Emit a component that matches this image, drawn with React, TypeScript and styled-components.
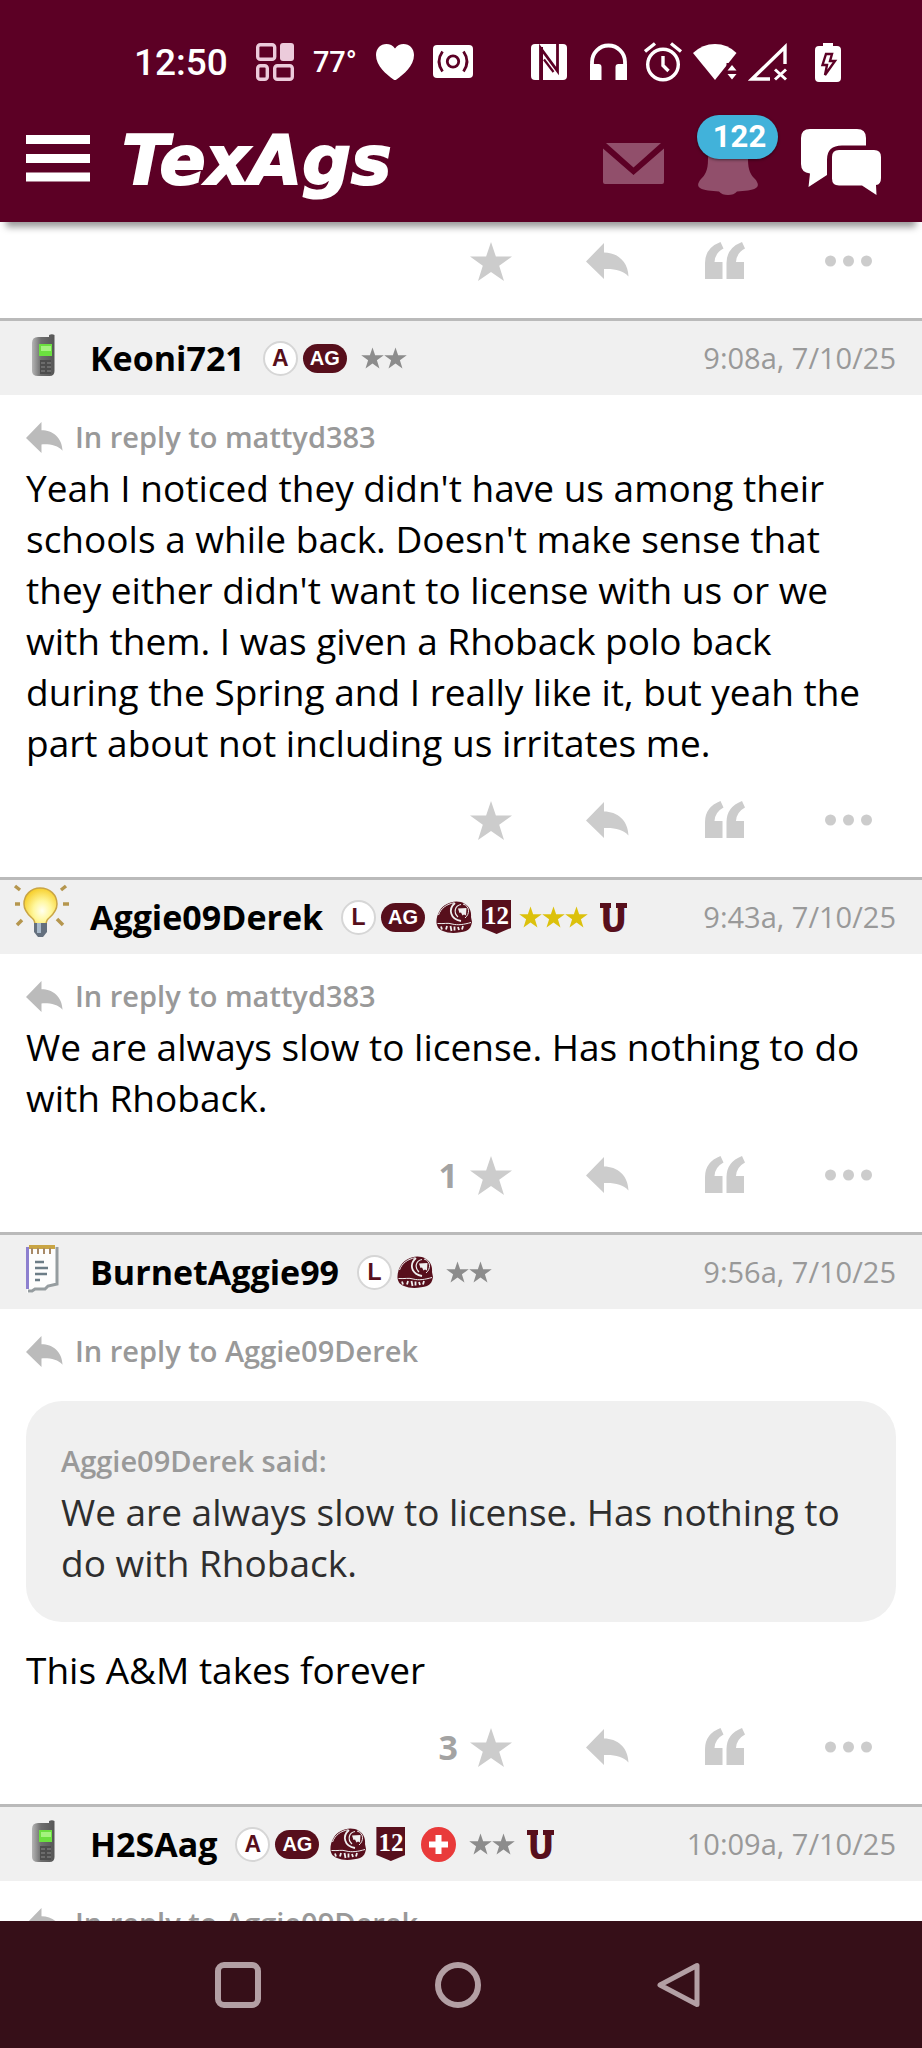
import React from "react";
import styled, { createGlobalStyle } from "styled-components";

const MAROON = "#5c0025";
const BADGE = "#570f1c";
const SANS = '"Open Sans", "Noto Sans", sans-serif';
const STAR = "M21 0 L25.9 14.6 H42 L29.2 23.7 L34 39 L21 29.9 L8 39 L12.8 23.7 L0 14.6 H16.1 Z";

const GlobalStyle = createGlobalStyle`
  * { box-sizing: border-box; }
  body { margin: 0; background: #fff; }
  button { padding: 0; border: 0; background: none; color: inherit; font: inherit; cursor: pointer; }
  a { color: inherit; text-decoration: none; }
  svg { display: block; flex: none; }
`;

const Screen = styled.div`
  display: flex;
  flex-direction: column;
  height: 100vh;
  font-family: ${SANS};
  color: #000;
`;

const Header = styled.header`
  position: relative;
  z-index: 1;
  flex: none;
  background: ${MAROON};
  color: #fff;
  box-shadow: 0 11px 7px -6px rgba(0, 0, 0, 0.4);
`;

const StatusBar = styled.div`
  display: flex;
  align-items: center;
  justify-content: space-between;
  height: 96px;
  padding: 28px 81px 0 134px;
  font-family: Roboto, sans-serif;
  font-weight: 500;
`;

const StatusGroup = styled.div<{ $gap: number }>`
  display: flex;
  align-items: center;
  gap: ${(p) => p.$gap}px;
`;

const Clock = styled.time`
  font-size: 37px;
  margin-right: 9px;
`;

const Temperature = styled.span`
  font-size: 29px;
`;

const TopBar = styled.div`
  display: flex;
  align-items: center;
  height: 126px;
  padding: 6px 41px 0 26px;
`;

const Logo = styled.a`
  flex: 1;
  margin-left: 32px;
  padding-bottom: 2px;
  font: italic 700 68px/72px "DejaVu Sans", sans-serif;
  -webkit-text-stroke: 2px #fff;
`;

const BarButton = styled.button<{ $left?: number }>`
  position: relative;
  margin-left: ${(p) => p.$left ?? 0}px;
`;

const Count = styled.span`
  position: absolute;
  left: 0;
  top: -14px;
  width: 81px;
  height: 44px;
  border-radius: 22px;
  background: #41b2da;
  box-shadow: 0 1px 3px rgba(0, 0, 0, 0.5);
  color: #fff;
  font: 700 31px/43px Roboto, sans-serif;
  text-align: center;
  padding-left: 4px;
`;

const Feed = styled.main`
  flex: 1;
  min-height: 0;
  overflow: hidden;
`;

const Post = styled.article``;

const PostHeader = styled.header`
  display: flex;
  align-items: center;
  height: 77px;
  padding-right: 26px;
  border-top: 3px solid #bababa;
  background: #f0f0f0;
`;

const UserName = styled.a`
  margin-right: 18px;
  font-size: 34px;
  line-height: 48px;
  font-weight: 700;
`;

const Badges = styled.div`
  display: flex;
  align-items: center;
`;

const Circle = styled.span`
  width: 35px;
  height: 35px;
  border: 2px solid #d6d6d6;
  border-radius: 50%;
  background: #fff;
  color: ${BADGE};
  font: 700 23px/31px "Liberation Sans", sans-serif;
  text-align: center;
`;

const Pill = styled.span`
  width: 44px;
  height: 29px;
  margin: 0 6px 0 5px;
  border-radius: 15px;
  background: ${BADGE};
  color: #fff;
  font: 700 20px/29px "Liberation Sans", sans-serif;
  text-align: center;
`;

const HelmetBox = styled.span`
  margin: 0 5px;
`;

const Shield = styled.span`
  width: 29px;
  height: 34px;
  margin-left: 5px;
  background: ${BADGE};
  clip-path: polygon(0 0, 100% 0, 100% 82%, 50% 100%, 0 82%);
  color: #fff;
  font: 700 25px/31px "Liberation Serif", serif;
  text-align: center;
`;

const Plus = styled.span`
  margin: 0 5px 0 16px;
`;

const StarRow = styled.span`
  display: flex;
  margin-left: 8px;
`;

const BlockU = styled.span`
  width: 27px;
  height: 29px;
  margin-left: 12px;
  background:
    linear-gradient(${BADGE}, ${BADGE}) 0 0 / 11px 5px no-repeat,
    linear-gradient(${BADGE}, ${BADGE}) 100% 0 / 11px 5px no-repeat;
  color: ${BADGE};
  font: 700 44px/35px "Liberation Mono", monospace;
  text-align: center;
`;

const Posted = styled.time`
  margin-left: auto;
  color: #999;
  font-size: 29px;
  line-height: 42px;
`;

const PostBody = styled.div`
  padding: 21px 26px 0;
`;

const InReply = styled.a`
  display: flex;
  align-items: center;
  gap: 12px;
  margin-bottom: 4px;
  color: #999;
  font-size: 29px;
  line-height: 42px;
  font-weight: 600;
`;

const Message = styled.p`
  margin: 0;
  padding-right: 8px;
  font-size: 37px;
  line-height: 51px;
`;

const Quote = styled.blockquote`
  margin: 29px 0 22px;
  padding: 39px 35px 34px;
  border-radius: 36px;
  background: #f0f0f0;
  color: #2e2e2e;
`;

const Said = styled.cite`
  display: block;
  margin-bottom: 4px;
  color: #999;
  font-size: 29px;
  line-height: 42px;
  font-style: normal;
  font-weight: 600;
`;

const Actions = styled.footer<{ $spaced?: boolean }>`
  display: flex;
  align-items: center;
  justify-content: flex-end;
  height: 96px;
  margin-top: ${(p) => (p.$spaced ? 13 : 0)}px;
  padding: 0 50px 18px 0;
  color: #ccc;
`;

const ActionButton = styled.button<{ $right: number }>`
  display: flex;
  align-items: center;
  gap: 12px;
  margin-right: ${(p) => p.$right}px;
`;

const Likes = styled.span`
  color: #a3a3a3;
  font-size: 34px;
  line-height: 40px;
  font-weight: 700;
`;

const NavBar = styled.nav`
  flex: none;
  display: flex;
  align-items: center;
  justify-content: center;
  gap: 174px;
  height: 127px;
  padding-right: 6px;
  background: #360f18;
  color: #b39fa4;
`;

/* ---------- status bar icons ---------- */

const WidgetsIcon = () => (
  <svg width="38" height="38" viewBox="0 0 38 38" fill="none" stroke="#eccbdb" strokeWidth="3.4">
    <rect x="1.7" y="1.7" width="17" height="14.6" rx="2.6" />
    <rect x="24" y="0" width="14" height="18" rx="3" fill="#eccbdb" stroke="none" />
    <rect x="1.7" y="22.7" width="9.6" height="13.6" rx="2.6" />
    <rect x="18.7" y="22.7" width="17.6" height="13.6" rx="2.6" />
  </svg>
);

const HeartIcon = () => (
  <svg width="38" height="36" viewBox="0 0 38 36" fill="#fff">
    <path d="M19 4.6C21 1.4 24.400 0 27.500 0 33.500 0 38 4.600 38 11c0 11-10.500 19.500-17.500 24.500q-1.500 1-3 0C10.500 30.500 0 22 0 11 0 4.600 4.500 0 10.500 0 13.600 0 17 1.400 19 4.600z" />
  </svg>
);

const CastIcon = () => (
  <svg width="40" height="34" viewBox="0 0 40 34" fill="none" stroke={MAROON} strokeWidth="2.8">
    <rect width="40" height="33" rx="4" fill="#fff" stroke="none" />
    <circle cx="20" cy="16.500" r="5.700" />
    <path d="M9.500 6.500Q2.500 16.500 9.500 26.500M30.500 6.500q7 10 0 20" />
  </svg>
);

const NfcIcon = () => (
  <svg width="49" height="38" viewBox="0 0 49 38">
    <rect y="1" width="36" height="36" rx="4" fill="#fff" />
    <path d="M9.500 38V5L26.500 28V0" fill="none" stroke={MAROON} strokeWidth="2.800" />
    <path d="M9 38V4h3v34z" fill={MAROON} />
    <path d="M13 16.500L22.500 29" fill="none" stroke={MAROON} strokeWidth="2.200" />
  </svg>
);

const HeadphonesIcon = () => (
  <svg width="44" height="38" viewBox="0 0 44 38">
    <path d="M2 26V19a16.500 16.500 0 0 1 33 0v7" fill="none" stroke="#fff" strokeWidth="3.800" />
    <path d="M0 21h8.500q3 0 3 3v13H0zM37 21h-8.500q-3 0-3 3v13H37z" fill="#fff" />
  </svg>
);

const AlarmIcon = () => (
  <svg width="39" height="40" viewBox="0 0 39 40" fill="none" stroke="#fff" strokeWidth="3.400">
    <circle cx="19" cy="22.500" r="15.300" />
    <path d="M19 14v9.500l5.500 5.500M1 9.500L11 1.500M27 1.500L37 9.500" />
  </svg>
);

const WifiIcon = () => (
  <svg width="45" height="38" viewBox="0 0 45 38" fill="#fff">
    <path d="M0 10Q9.500 1 22 1t21.500 9L22 37z" />
    <path d="M33.500 37V20h12v17z" fill={MAROON} />
    <path d="M34.500 27.500L39 22l4.500 5.500zM34.500 31h9L39 36.500z" />
  </svg>
);

const SignalIcon = () => (
  <svg width="57" height="38" viewBox="0 0 57 38" fill="none" stroke="#fff" strokeWidth="3.400">
    <path d="M22 36H4L37 4v17" />
    <path d="M27 26.500l11 10M38 26.500l-11 10" strokeWidth="3" />
  </svg>
);

const BatteryIcon = () => (
  <svg width="26" height="39" viewBox="0 0 26 39">
    <path d="M8 0h10v3h4q4 0 4 4v28q0 4-4 4H4q-4 0-4-4V7q0-4 4-4h4z" fill="#fff" />
    <path d="M11 11h6l-2 7h5L10 32l2-10H7.500z" fill="#fff" stroke={MAROON} strokeWidth="2.400" />
  </svg>
);

/* ---------- top bar icons ---------- */

const MenuIcon = () => (
  <svg width="64" height="66" viewBox="0 0 64 66" fill="#fff">
    <path d="M0 6h64v9H0zM0 25h64v9H0zM0 43.500h64v9H0z" />
  </svg>
);

const MailIcon = () => (
  <svg width="61" height="66" viewBox="0 0 61 66" fill="#914f6b">
    <path d="M3 14h55L30.500 38.500z" />
    <path d="M0 19.500L30.500 46 61 19.500V53q0 2-2 2H2q-2 0-2-2z" />
  </svg>
);

const BellIcon = () => (
  <svg width="81" height="66" viewBox="0 0 81 66" fill="#914f6b">
    <path d="M31 6c-14 2-20 11-20 24 0 12-3 16-7 20-5 6-4 10 7 11.500l11 1q3 3.500 9 3.500t9-3.500l11-1c11-1.500 12-5.500 7-11.500-4-4-7-8-7-20C51 17 45 8 31 6z" />
  </svg>
);

const ChatIcon = () => (
  <svg width="80" height="66" viewBox="0 0 80 66" fill="#fff">
    <path d="M9 0h47q9 0 9 9v7.500H41q-15 0-15 14V46L7.500 58 9 44.500Q0 43.500 0 35V9q0-9 9-9z" />
    <path d="M38 21h35q7 0 7 7v21q0 6.500-5 7l.500 10L61 56.500H38q-7 0-7-7V28q0-7 7-7z" />
  </svg>
);

/* ---------- action icons ---------- */

const ReplyArrow = ({ width, color }: { width: number; color: string }) => (
  <svg width={width} height={Math.round((width * 36) / 43)} viewBox="0 0 43 36" fill={color}>
    <path d="M18 0v9.500C31 9.500 42 18 42.500 33.500 37 27 28 25.500 18 26v10L0 18.500z" />
  </svg>
);

const StarIcon = () => (
  <svg width="42" height="39" viewBox="0 0 42 39" fill="currentColor"><path d={STAR} /></svg>
);

const QuoteIcon = () => (
  <svg width="40" height="38" viewBox="0 0 40 38" fill="currentColor">
    <path d="M15.500 0l3 6.500Q10 11 9.500 20h8v17H0V21Q0 6 15.500 0z" />
    <path d="M37 0l3 6.500Q31.500 11 31 20h8v17H21.500V21Q21.500 6 37 0z" />
  </svg>
);

const DotsIcon = () => (
  <svg width="47" height="12" viewBox="0 0 47 12" fill="currentColor">
    <circle cx="5.500" cy="6" r="5.500" />
    <circle cx="23.500" cy="6" r="5.500" />
    <circle cx="41.500" cy="6" r="5.500" />
  </svg>
);

/* ---------- avatars ---------- */

const PhoneAvatar = () => (
  <svg width="90" height="74" viewBox="0 0 90 74">
    <defs>
      <linearGradient id="shell" x1="0" x2="1">
        <stop offset="0" stopColor="#b5b5b5" />
        <stop offset=".4" stopColor="#6e6e6e" />
        <stop offset="1" stopColor="#565656" />
      </linearGradient>
    </defs>
    <path d="M49 14q3-1.500 5.500 0v36q0 5-5 5H38q-6 0-6-5V22q0-6 6-6h11z" fill="url(#shell)" />
    <rect x="39" y="23" width="13" height="12" fill="#6be03f" />
    <rect x="41" y="25" width="10" height="5" fill="#a4f37f" />
    <path d="M40 39h11v14H40z" fill="#4d4d4d" />
    <path d="M41 42h4m2 0h4M41 46h4m2 0h4M41 50h4m2 0h4" stroke="#777" strokeWidth="1.500" />
  </svg>
);

const BulbAvatar = () => (
  <svg width="90" height="74" viewBox="0 0 90 74">
    <defs>
      <radialGradient id="glow" cx=".55" cy=".6" r=".6">
        <stop offset="0" stopColor="#fffff0" />
        <stop offset=".45" stopColor="#fff79c" />
        <stop offset="1" stopColor="#f7cf2c" />
      </radialGradient>
    </defs>
    <path d="M15 6l5 4M66 6l-5 4M15 24h5M63 24h6M17 45l5-5M63 45l-6-6" stroke="#b5964e" strokeWidth="3.500" />
    <path d="M40 8c10 0 17 7 17 16 0 8-6 12-9 15-2 2-2 5-2 7H35c0-2 0-5-2-7-3-3-9-7-9-15C24 15 31 8 40 8z" fill="url(#glow)" stroke="#c9a545" strokeWidth="1.500" />
    <path d="M34 43h13v9l-4 5h-5l-4-5z" fill="#64707e" />
    <path d="M37 43h4v10h-4z" fill="#a9bacb" />
  </svg>
);

const NoteAvatar = () => (
  <svg width="90" height="74" viewBox="0 0 90 74">
    <path d="M27 12h30v38l-9 2-3 3H34l-3 3h-4z" fill="#fdfdfd" />
    <path d="M27.500 12v42" stroke="#8d80cf" strokeWidth="3" />
    <path d="M57 12v37l-9 2-3 3H35l-3 2h-4" fill="none" stroke="#969da0" strokeWidth="3" />
    <path d="M29 12h26" stroke="#c9a544" strokeWidth="4" />
    <path d="M32 13v6M38 13v6M44 13v6M50 13v6" stroke="#a88a68" strokeWidth="2" />
    <path d="M35 27h9M35 33h13M35 39h12M35 45h5" stroke="#6c7d87" strokeWidth="2.500" />
  </svg>
);

const avatars = { phone: PhoneAvatar, bulb: BulbAvatar, note: NoteAvatar };

/* ---------- badges ---------- */

const RingBadge = () => (
  <HelmetBox>
    <svg width="36" height="32" viewBox="0 0 36 32" fill="none">
      <path d="M.500 22C0 15 4 6 11 3 16 0 24-.500 29 3c5 3 6.500 8 6 13l1 5c-1 5-2 7-6 9-6 2-17 3-23 0C2 28 1 25 .500 22z" fill={BADGE} />
      <path d="M2.500 14C5 7 11 3 18 1.800" stroke="#f0f0f0" strokeWidth="1" />
      <path d="M19 2C12 8 14 18 25 20" stroke="#f0f0f0" strokeWidth="1.800" />
      <path d="M25 3.500c-6 1-8 8-3 12.500" stroke="#f0f0f0" strokeWidth="1.200" />
      <path d="M27 3c7 2 7 10 2 14" stroke="#f0f0f0" strokeWidth="1" />
      <path d="M22 7.500L30.500 7l-.500 7.500-2-1-1.500 1-1.500-3-1.500.500z" fill="#f0f0f0" />
      <path d="M1.500 22.500C8 23 12 21.500 16 23c6 1.500 12 .500 19-1.500" stroke="#f0f0f0" strokeWidth="1" />
      <path d="M5 25.500l1 3M11 25l-1 3.500M14.500 25l1 5M18.500 25.500v4M22 26l1 3M27 25l-1 3.500" stroke="#f0f0f0" strokeWidth="1.800" />
    </svg>
  </HelmetBox>
);

const PlusBadge = () => (
  <Plus>
    <svg width="35" height="35" viewBox="0 0 35 35">
      <circle cx="17.500" cy="17.500" r="17.500" fill="#e93a3a" />
      <path d="M17.500 8v19M8 17.500h19" stroke="#fff" strokeWidth="6" />
    </svg>
  </Plus>
);

const Stars = ({ count, color }: { count: number; color: string }) => (
  <StarRow role="img" aria-label={`${count} stars`}>
    {Array.from({ length: count }, (_, i) => (
      <svg key={i} width="23" height="22" viewBox="0 -1 42 41" fill={color}><path d={STAR} /></svg>
    ))}
  </StarRow>
);

const ActionRow = ({ likes, spaced }: { likes?: number; spaced?: boolean }) => (
  <Actions $spaced={spaced}>
    <ActionButton $right={74} aria-label="Star">
      {likes ? <Likes>{likes}</Likes> : null}
      <StarIcon />
    </ActionButton>
    <ActionButton $right={76} aria-label="Reply"><ReplyArrow width={43} color="#ccc" /></ActionButton>
    <ActionButton $right={80} aria-label="Quote"><QuoteIcon /></ActionButton>
    <ActionButton $right={0} aria-label="More"><DotsIcon /></ActionButton>
  </Actions>
);

interface PostProps {
  avatar: keyof typeof avatars;
  name: string;
  time: string;
  replyTo: string;
  badges: React.ReactNode;
  likes?: number;
  children?: React.ReactNode;
}

const ForumPost = ({ avatar, name, time, replyTo, badges, likes, children }: PostProps) => {
  const Avatar = avatars[avatar];
  return (
    <Post>
      <PostHeader>
        <Avatar />
        <UserName href="#user">{name}</UserName>
        <Badges>{badges}</Badges>
        <Posted>{time}</Posted>
      </PostHeader>
      <PostBody>
        <InReply href="#parent">
          <ReplyArrow width={37} color="#bbb" />
          In reply to {replyTo}
        </InReply>
        {children}
      </PostBody>
      <ActionRow likes={likes} spaced />
    </Post>
  );
};

export default function App() {
  return (
    <Screen>
      <GlobalStyle />
      <Header>
        <StatusBar>
          <StatusGroup $gap={19}>
            <Clock>12:50</Clock>
            <WidgetsIcon />
            <Temperature>77°</Temperature>
            <HeartIcon />
            <CastIcon />
          </StatusGroup>
          <StatusGroup $gap={10}>
            <NfcIcon />
            <HeadphonesIcon />
            <AlarmIcon />
            <WifiIcon />
            <SignalIcon />
            <BatteryIcon />
          </StatusGroup>
        </StatusBar>
        <TopBar>
          <BarButton aria-label="Menu"><MenuIcon /></BarButton>
          <Logo href="#home">TexAgs</Logo>
          <BarButton aria-label="Messages"><MailIcon /></BarButton>
          <BarButton $left={33} aria-label="Notifications">
            <BellIcon />
            <Count>122</Count>
          </BarButton>
          <BarButton $left={23} aria-label="Forums"><ChatIcon /></BarButton>
        </TopBar>
      </Header>
      <Feed>
        <ActionRow />
        <ForumPost
          avatar="phone"
          name="Keoni721"
          time="9:08a, 7/10/25"
          replyTo="mattyd383"
          badges={<><Circle>A</Circle><Pill>AG</Pill><Stars count={2} color="#8c8c8c" /></>}
        >
          <Message>
            Yeah I noticed they didn't have us among their schools a while back. Doesn't make sense that
            they either didn't want to license with us or we with them. I was given a Rhoback polo back
            during the Spring and I really like it, but yeah the part about not including us irritates me.
          </Message>
        </ForumPost>
        <ForumPost
          avatar="bulb"
          name="Aggie09Derek"
          time="9:43a, 7/10/25"
          replyTo="mattyd383"
          likes={1}
          badges={
            <>
              <Circle>L</Circle><Pill>AG</Pill><RingBadge /><Shield>12</Shield>
              <Stars count={3} color="#dcc10c" /><BlockU>U</BlockU>
            </>
          }
        >
          <Message>We are always slow to license. Has nothing to do with Rhoback.</Message>
        </ForumPost>
        <ForumPost
          avatar="note"
          name="BurnetAggie99"
          time="9:56a, 7/10/25"
          replyTo="Aggie09Derek"
          likes={3}
          badges={<><Circle>L</Circle><RingBadge /><Stars count={2} color="#8c8c8c" /></>}
        >
          <Quote>
            <Said>Aggie09Derek said:</Said>
            <Message>We are always slow to license. Has nothing to do with Rhoback.</Message>
          </Quote>
          <Message>This A&amp;M takes forever</Message>
        </ForumPost>
        <ForumPost
          avatar="phone"
          name="H2SAag"
          time="10:09a, 7/10/25"
          replyTo="Aggie09Derek"
          badges={
            <>
              <Circle>A</Circle><Pill>AG</Pill><RingBadge /><Shield>12</Shield><PlusBadge />
              <Stars count={2} color="#8c8c8c" /><BlockU>U</BlockU>
            </>
          }
        />
      </Feed>
      <NavBar>
        <button aria-label="Recent apps">
          <svg width="46" height="46" viewBox="0 0 46 46" fill="none" stroke="currentColor" strokeWidth="6">
            <rect x="3" y="3" width="40" height="40" rx="6" />
          </svg>
        </button>
        <button aria-label="Home">
          <svg width="46" height="46" viewBox="0 0 46 46" fill="none" stroke="currentColor" strokeWidth="6">
            <circle cx="23" cy="23" r="20" />
          </svg>
        </button>
        <button aria-label="Back">
          <svg width="46" height="46" viewBox="0 0 46 46" fill="none" stroke="currentColor" strokeWidth="5" strokeLinejoin="round">
            <path d="M42 3.500v39L5 23z" />
          </svg>
        </button>
      </NavBar>
    </Screen>
  );
}
